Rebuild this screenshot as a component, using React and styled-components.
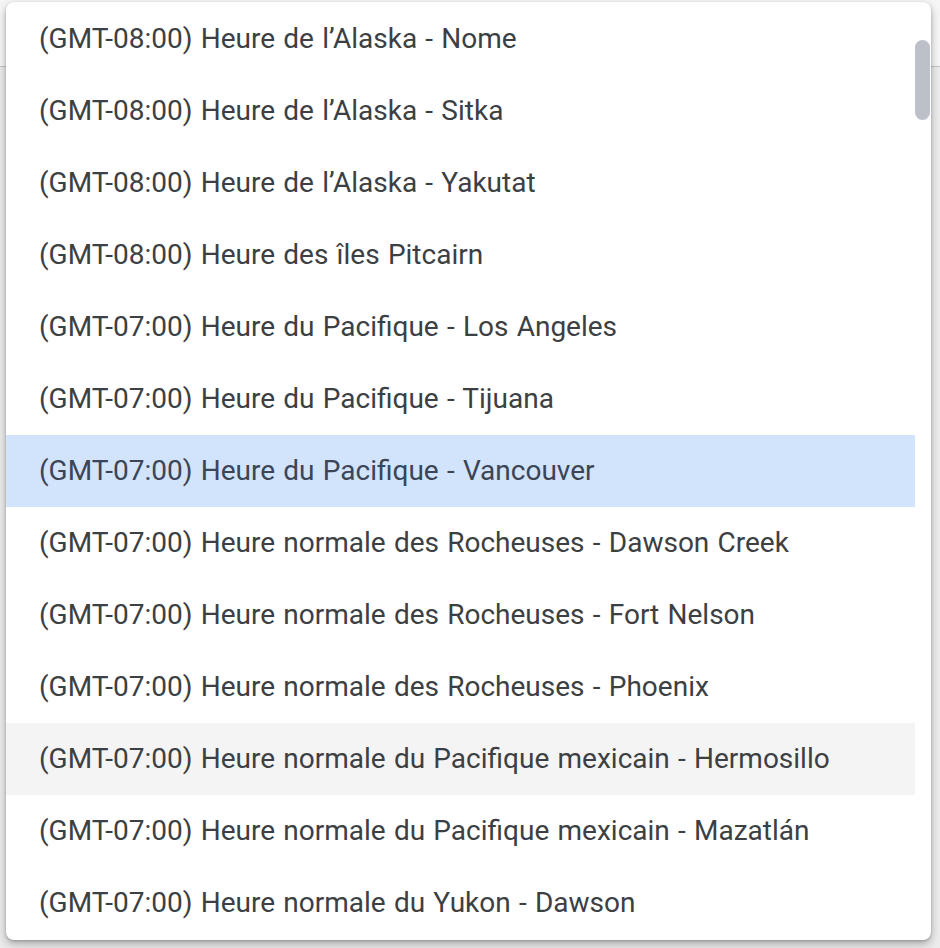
import React from "react";
import styled, { createGlobalStyle } from "styled-components";

const Global = createGlobalStyle`
  html, body { margin: 0; padding: 0; }
  body {
    width: 940px;
    height: 948px;
    overflow: hidden;
    background: #f1f1f1;
    font-family: Roboto, "Noto Sans", Arial, sans-serif;
  }
`;

const Page = styled.div`
  position: relative;
  width: 940px;
  height: 948px;
  background: #ececec;
`;

const HeaderBar = styled.div`
  height: 66px;
  border-bottom: 1px solid #c4c4c4;
  background: #f6f6f6;
`;

const Menu = styled.div`
  position: absolute;
  left: 6px;
  top: 2px;
  width: 925px;
  height: 938px;
  background: #ffffff;
  border-radius: 8px;
  box-shadow: 0 4px 10px rgba(0, 0, 0, 0.28), 0 1px 3px rgba(0, 0, 0, 0.2);
  overflow: hidden;
`;

const List = styled.ul`
  list-style: none;
  margin: 0;
  padding: 1px 16px 0 0;
  display: flex;
  flex-direction: column;
`;

const Option = styled.li`
  box-sizing: border-box;
  height: 72px;
  display: flex;
  align-items: center;
  padding: 0 0 2px 33px;
  font-size: 28px;
  word-spacing: 1.3px;
  color: ${(p) => (p.$selected ? "#3b4556" : "#3c4043")};
  background: ${(p) =>
    p.$selected ? "#d2e3fc" : p.$hover ? "#f4f4f4" : "transparent"};
  white-space: nowrap;
`;

const ScrollThumb = styled.div`
  position: absolute;
  right: 1px;
  top: 38px;
  width: 15px;
  height: 80px;
  border-radius: 8px;
  background: #bcc0c9;
`;

const options = [
  "(GMT-08:00) Heure de l’Alaska - Nome",
  "(GMT-08:00) Heure de l’Alaska - Sitka",
  "(GMT-08:00) Heure de l’Alaska - Yakutat",
  "(GMT-08:00) Heure des îles Pitcairn",
  "(GMT-07:00) Heure du Pacifique - Los Angeles",
  "(GMT-07:00) Heure du Pacifique - Tijuana",
  "(GMT-07:00) Heure du Pacifique - Vancouver",
  "(GMT-07:00) Heure normale des Rocheuses - Dawson Creek",
  "(GMT-07:00) Heure normale des Rocheuses - Fort Nelson",
  "(GMT-07:00) Heure normale des Rocheuses - Phoenix",
  "(GMT-07:00) Heure normale du Pacifique mexicain - Hermosillo",
  "(GMT-07:00) Heure normale du Pacifique mexicain - Mazatlán",
  "(GMT-07:00) Heure normale du Yukon - Dawson",
];

export default function App() {
  return (
    <>
      <Global />
      <Page>
        <HeaderBar />
        <Menu>
          <List>
            {options.map((o, i) => (
              <Option key={i} $selected={i === 6} $hover={i === 10}>
                {o}
              </Option>
            ))}
          </List>
          <ScrollThumb />
        </Menu>
      </Page>
    </>
  );
}
